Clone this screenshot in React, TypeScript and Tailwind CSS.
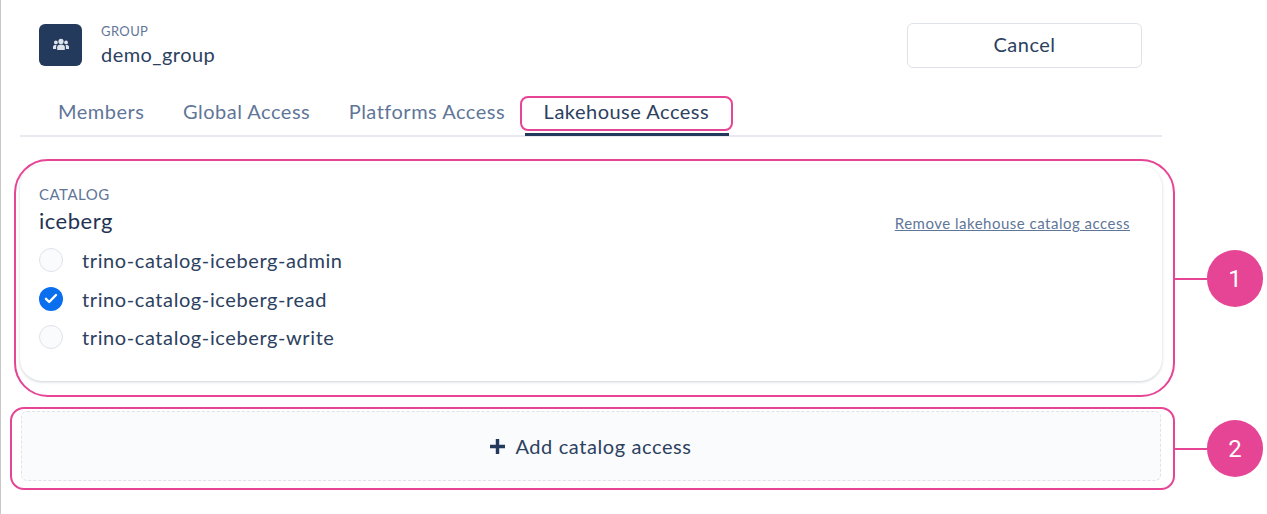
const font = { fontFamily: "Lato, 'Open Sans', sans-serif" };

const tabs = ["Members", "Global Access", "Platforms Access", "Lakehouse Access"];
const roles = [
  { name: "trino-catalog-iceberg-admin", checked: false },
  { name: "trino-catalog-iceberg-read", checked: true },
  { name: "trino-catalog-iceberg-write", checked: false },
];

const GroupIcon = () => (
  <svg width="18" height="14" viewBox="0 0 18 14" fill="#dfe4ec">
    <circle cx="9" cy="3.4" r="2.6" />
    <circle cx="3.9" cy="4.4" r="1.9" />
    <circle cx="14.1" cy="4.4" r="1.9" />
    <path d="M5.2 12V9.2C5.2 7.5 6.6 6.6 9 6.6s3.8.9 3.8 2.6V12z" />
    <path d="M1 11V8.8C1 7.4 2.2 6.9 4.6 7 4.2 7.6 4.1 8.3 4.1 9.2V11zM17 11V8.8c0-1.4-1.2-1.9-3.6-1.8.4.6.5 1.3.5 2.2V11z" />
  </svg>
);

const Check = ({ checked }: { checked: boolean }) =>
  checked ? (
    <span className="flex h-6 w-6 items-center justify-center rounded-full bg-[#0a6fee]">
      <svg width="14" height="11" viewBox="0 0 14 11" fill="none" stroke="white" strokeWidth="2.4" strokeLinecap="round" strokeLinejoin="round">
        <path d="M2 5.8 5.2 9 12 2" />
      </svg>
    </span>
  ) : (
    <span className="h-6 w-6 rounded-full border border-[#dfe2ea] bg-[#fafbfd]" />
  );

const Callout = ({ n, className }: { n: number; className: string }) => (
  <div className={`absolute left-[1174px] flex items-center ${className}`}>
    <div className="h-[2px] w-[32px] bg-[#e64494]" />
    <div className="flex h-[57px] w-[56px] items-center justify-center rounded-full bg-[#e64494] text-[24px] text-white [font-family:Roboto,sans-serif]">
      {n}
    </div>
  </div>
);

export default function App() {
  return (
    <div className="relative h-[514px] w-[1267px] overflow-hidden border-l border-[#c9c9c9] bg-white" style={font}>
      <div className="flex items-start justify-between pl-[38px] pr-[125px] pt-[22px]">
        <div className="flex items-center gap-[19px]">
          <div className="flex h-[42px] w-[43px] items-center justify-center rounded-md bg-[#233a5c]">
            <GroupIcon />
          </div>
          <div className="flex flex-col">
            <span className="text-[13px] leading-[18px] tracking-[0.4px] text-[#5f7698]">GROUP</span>
            <span className="mt-px text-[20px] leading-[26px] tracking-[0.45px] text-[#2c4160]">demo_group</span>
          </div>
        </div>
        <button className="mt-px h-[45px] w-[235px] rounded-md border border-[#dfe2e8] pb-1 text-[20px] tracking-[0.5px] text-[#2c4160]">
          Cancel
        </button>
      </div>

      <div className="ml-[19px] mt-[30px] h-[39px] w-[1142px] border-b-2 border-[#e8e9ee] pl-[38px]">
        <div className="flex gap-[38.5px]">
          {tabs.map((tab, i) => (
            <span key={tab} className={`relative whitespace-nowrap text-[20px] leading-[26px] tracking-[0.5px] ${i === 3 ? "text-[#2c4160]" : "text-[#5f7698]"}`}>
              {tab}
              {i === 3 && <span className="absolute -left-[19px] -right-[20px] top-[35px] h-[3px] bg-[#233a5c]" />}
            </span>
          ))}
        </div>
      </div>

      <div className="ml-[19px] mt-[28px] h-[216px] w-[1142px] rounded-[22px] bg-white pl-[19px] pr-[32px] pt-[19px] shadow-[0_1px_3px_rgba(30,40,70,0.22)]">
        <div className="text-[15px] leading-[20px] tracking-[0.5px] text-[#5f7698]">CATALOG</div>
        <div className="mt-[2px] flex items-end justify-between">
          <span className="text-[22px] leading-[30px] tracking-[0.5px] text-[#1f3452]">iceberg</span>
          <a className="pb-[3px] text-[15px] leading-[20px] tracking-[0.5px] text-[#5f7698] underline">Remove lakehouse catalog access</a>
        </div>
        <div className="mt-[12px] flex flex-col gap-[14.7px]">
          {roles.map((role) => (
            <div key={role.name} className="flex h-6 items-center gap-[19px]">
              <Check checked={role.checked} />
              <span className="text-[20px] tracking-[0.6px] text-[#2c4160]">{role.name}</span>
            </div>
          ))}
        </div>
      </div>

      <div className="ml-5 mt-[30px] flex h-[70px] w-[1140px] items-center justify-center gap-[10px] rounded-md border border-dashed border-[#dfe2ea] bg-[#fafbfd] text-[20px] tracking-[0.6px] text-[#2c4160]">
        <svg width="15" height="15" viewBox="0 0 14 14" fill="#233a5c">
          <path d="M5.4 0h3.2v5.4H14v3.2H8.6V14H5.4V8.6H0V5.4h5.4z" />
        </svg>
        Add catalog access
      </div>

      {/* annotation outlines */}
      <div className="absolute left-[519px] top-[96px] h-[35px] w-[213px] rounded-[8px] border-2 border-[#e64494]" />
      <div className="absolute left-[13px] top-[159px] h-[238px] w-[1161px] rounded-[34px] border-2 border-[#e64494]" />
      <div className="absolute left-[9px] top-[407px] h-[83px] w-[1165px] rounded-[14px] border-2 border-[#e64494]" />
      <Callout n={1} className="top-[250px]" />
      <Callout n={2} className="top-[420px]" />
    </div>
  );
}
